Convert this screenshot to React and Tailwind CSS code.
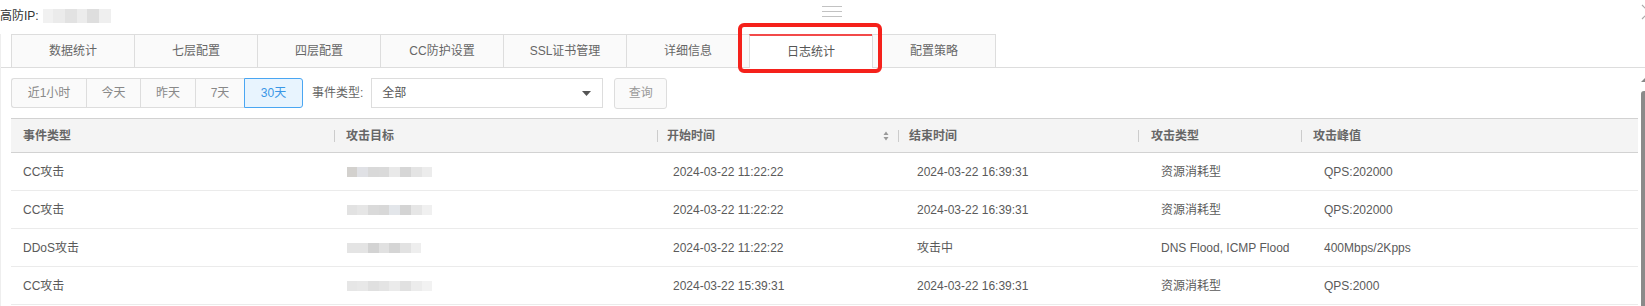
const TABS = ["数据统计", "七层配置", "四层配置", "CC防护设置", "SSL证书管理", "详细信息", "日志统计", "配置策略"];
const ACTIVE_TAB = 6;

const RANGES = [
  { label: "近1小时", w: "w-[75px]" },
  { label: "今天", w: "w-[54px]" },
  { label: "昨天", w: "w-[55px]" },
  { label: "7天", w: "w-[49px]" },
  { label: "30天", w: "w-[59px]" }
];

const COLUMNS = [
  { title: "事件类型", w: "w-[323px]", head: "pl-[12px]", cell: "pl-[12px]" },
  { title: "攻击目标", w: "w-[323px]", head: "pl-[12px]", cell: "pl-[13px]" },
  { title: "开始时间", w: "w-[241px]", head: "pl-[10px]", cell: "pl-[16px]", sort: true },
  { title: "结束时间", w: "w-[240px]", head: "pl-[11px]", cell: "pl-[19px]" },
  { title: "攻击类型", w: "w-[163px]", head: "pl-[13px]", cell: "pl-[23px]" },
  { title: "攻击峰值", w: "w-[337px]", head: "pl-[12px]", cell: "pl-[23px]" }
];

const BLUR_A = ["w-[10px] bg-[#d3d1ce]", "w-[11px] bg-[#e0e1e5]", "w-[11px] bg-[#d9d9d9]", "w-[10px] bg-[#dadada]", "w-[11px] bg-[#e9e9e9]", "w-[11px] bg-[#d6d6d6]", "w-[11px] bg-[#e4e4e4]", "w-[10px] bg-[#ececec]"];
const BLUR_B = ["w-[10px] bg-[#e2e2e2]", "w-[11px] bg-[#e6e6e6]", "w-[11px] bg-[#dadada]", "w-[10px] bg-[#d8d8d8]", "w-[11px] bg-[#e3e6ea]", "w-[11px] bg-[#d4d4d4]", "w-[11px] bg-[#e6e6e6]", "w-[10px] bg-[#f0f0f0]"];
const BLUR_C = ["w-[10px] bg-[#e4e4e4]", "w-[11px] bg-[#e4e4e4]", "w-[11px] bg-[#d3d3d3]", "w-[10px] bg-[#e1e1e1]", "w-[11px] bg-[#d5d5d5]", "w-[11px] bg-[#e2e2e2]", "w-[10px] bg-[#eeeeee]"];
const BLUR_D = ["w-[10px] bg-[#e6e6e6]", "w-[11px] bg-[#e8e8e8]", "w-[11px] bg-[#e0e0e0]", "w-[10px] bg-[#e4e4e4]", "w-[11px] bg-[#ebebeb]", "w-[11px] bg-[#e1e1e1]", "w-[11px] bg-[#ececec]", "w-[10px] bg-[#f2f2f2]"];
const BLUR_IP = ["w-[10px] bg-[#f1f1f1]", "w-[12px] bg-[#ebebeb]", "w-[12px] bg-[#e2e2e2]", "w-[10px] bg-[#ececec]", "w-[12px] bg-[#dedede]", "w-[12px] bg-[#efefef]"];

const ROWS = [
  { type: "CC攻击", target: BLUR_A, start: "2024-03-22 11:22:22", end: "2024-03-22 16:39:31", atk: "资源消耗型", peak: "QPS:202000" },
  { type: "CC攻击", target: BLUR_B, start: "2024-03-22 11:22:22", end: "2024-03-22 16:39:31", atk: "资源消耗型", peak: "QPS:202000" },
  { type: "DDoS攻击", target: BLUR_C, start: "2024-03-22 11:22:22", end: "攻击中", atk: "DNS Flood, ICMP Flood", peak: "400Mbps/2Kpps" },
  { type: "CC攻击", target: BLUR_D, start: "2024-03-22 15:39:31", end: "2024-03-22 16:39:31", atk: "资源消耗型", peak: "QPS:2000" }
];

const Blur = ({ blocks, h = "h-[10px]" }) => (
  <div className={`flex ${h}`}>
    {blocks.map((b, i) => (
      <span key={i} className={`block h-full ${b}`} />
    ))}
  </div>
);

const SortIcon = () => (
  <svg width="6" height="10" viewBox="0 0 6 10" className="mr-[9px]">
    <path d="M3 0.5 L5.5 4 L0.5 4 Z" fill="#999" />
    <path d="M3 9.5 L5.5 6 L0.5 6 Z" fill="#999" />
  </svg>
);

const App = () => {
  const cells = (row) => [row.type, <Blur blocks={row.target} />, row.start, row.end, row.atk, row.peak];

  return (
    <div className="relative w-[1645px] h-[306px] overflow-hidden bg-white font-['Liberation_Sans','Noto_Sans_CJK_SC',sans-serif] text-[12px]">
      {/* drag handle */}
      <div className="absolute left-[822px] top-[6px] flex flex-col gap-[4px]">
        <span className="block w-[20px] h-px bg-[#c2c2c2]" />
        <span className="block w-[20px] h-px bg-[#c2c2c2]" />
        <span className="block w-[20px] h-px bg-[#c2c2c2]" />
      </div>

      {/* close, clipped by the window edge */}
      <svg width="16" height="16" viewBox="0 0 16 16" className="absolute left-[1641px] top-[4px]">
        <path d="M1 1 L15 15 M15 1 L1 15" stroke="#aaa" strokeWidth="1.2" />
      </svg>

      {/* scrollbar */}
      <div className="absolute left-[1641px] top-[78px] w-0 h-0 border-l-[4px] border-l-transparent border-b-[4px] border-b-[#888]" />
      <div className="absolute left-[1641px] top-[91px] bottom-0 w-[6px] rounded-tl-[3px] bg-[#8a8a8a]" />

      <div className="flex items-center h-[32px] text-[#333]">
        <span>高防IP:</span>
        <span className="ml-[4px]">
          <Blur blocks={BLUR_IP} h="h-[14px]" />
        </span>
      </div>

      <div className="border-l border-[#eeeeee] h-[274px]">
        <div className="mt-[2px] flex pl-[10px] border-b border-[#dddddd]">
          {TABS.map((tab, i) => {
            const active = i === ACTIVE_TAB;
            const last = i === TABS.length - 1;
            return (
              <div
                key={tab}
                className={`h-[33px] border-l border-[#dddddd] flex items-center justify-center ${last ? "w-[124px] border-r" : "w-[123px]"} ${
                  active ? "bg-white border-t-2 border-t-[#f24a4a] -mb-px h-[34px] pb-px text-[#555]" : "bg-[#fafafa] border-t text-[#666]"
                }`}
              >
                {tab}
              </div>
            );
          })}
        </div>

        <div className="mt-[10px] flex items-center pl-[10px] h-[30px]">
          <div className="flex h-full">
            {RANGES.map((r, i) => {
              const active = i === RANGES.length - 1;
              return (
                <div
                  key={r.label}
                  className={`${r.w} h-full flex items-center justify-center border-y border-l ${i === 0 ? "rounded-l-[3px]" : ""} ${
                    active ? "border-r rounded-r-[3px] border-[#4aa6f2] bg-[#e8f4fe] text-[#3a97e6]" : "border-[#dddddd] bg-[#fafafa] text-[#888]"
                  }`}
                >
                  {r.label}
                </div>
              );
            })}
          </div>
          <span className="ml-[9px] text-[#666]">事件类型:</span>
          <div className="ml-[8px] w-[232px] h-full border border-[#dddddd] bg-white flex items-center justify-between pl-[10px] pr-[11px] text-[#555]">
            <span>全部</span>
            <svg width="9" height="5" viewBox="0 0 9 5">
              <path d="M0 0 L9 0 L4.5 5 Z" fill="#555" />
            </svg>
          </div>
          <div className="ml-[11px] w-[53px] h-[31px] border border-[#dddddd] rounded-[3px] bg-[#fafafa] flex items-center justify-center text-[#999]">
            查询
          </div>
        </div>

        <div className="mt-[10px] ml-[10px] w-[1627px]">
          <div className="flex h-[35px] bg-[#f4f4f4] border-y border-[#d2d2d2] font-bold text-[#666]">
            {COLUMNS.map((c, i) => (
              <div key={c.title} className={`${c.w} h-full flex items-center relative ${c.head}`}>
                {i > 0 ? <span className="absolute left-0 top-[11px] h-[12px] w-px bg-[#cccccc]" /> : null}
                <span className="flex-1">{c.title}</span>
                {c.sort ? <SortIcon /> : null}
              </div>
            ))}
          </div>
          {ROWS.map((row, r) => (
            <div key={r} className="flex h-[38px] border-b border-[#ebebeb] text-[#5a5a5a]">
              {cells(row).map((v, i) => (
                <div key={i} className={`${COLUMNS[i].w} h-full flex items-center ${COLUMNS[i].cell}`}>
                  {v}
                </div>
              ))}
            </div>
          ))}
        </div>
      </div>

      {/* annotation box around the active tab */}
      <div className="absolute left-[738px] top-[23px] w-[144px] h-[50px] border-[4px] border-[#f5211b] rounded-[6px]" />
    </div>
  );
};

export default App;
